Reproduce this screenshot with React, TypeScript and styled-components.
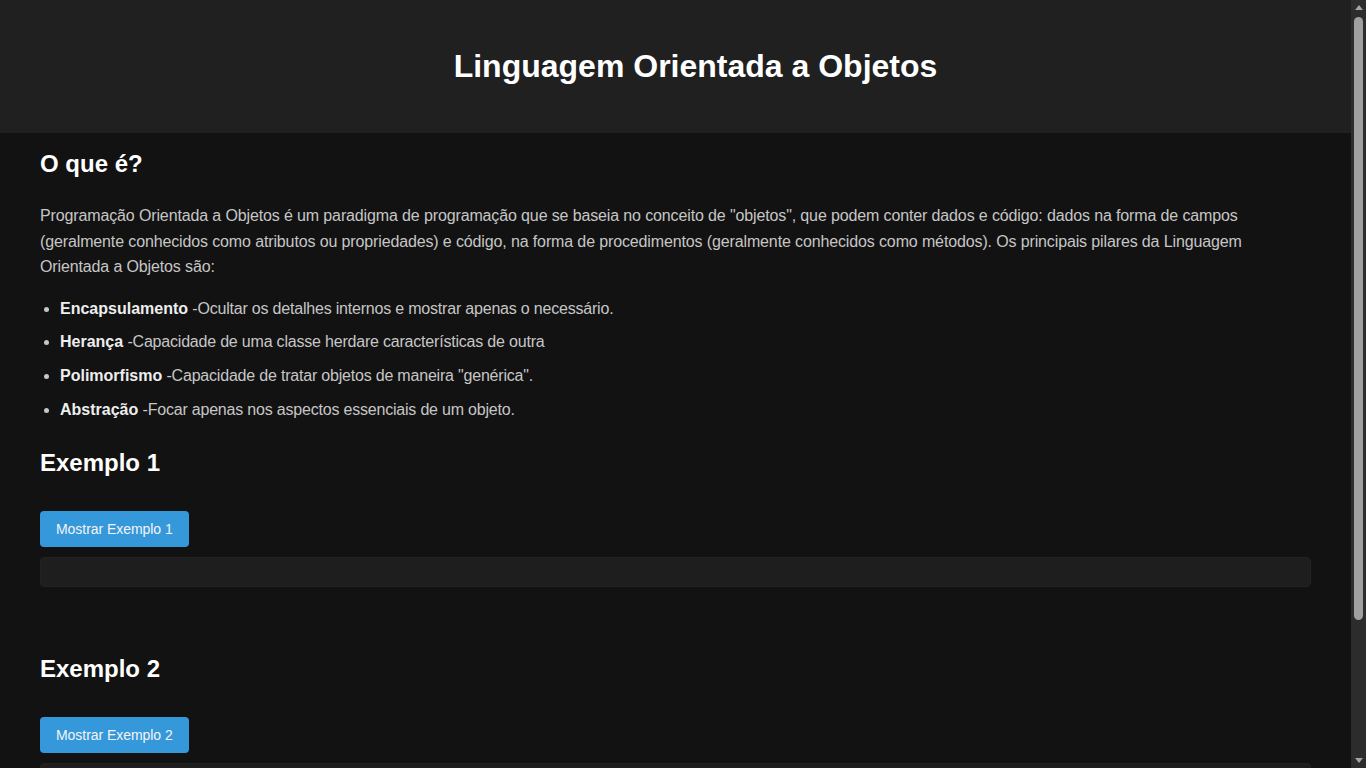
import React from "react";
import styled, { createGlobalStyle } from "styled-components";

const GlobalStyle = createGlobalStyle`
  body {
    margin: 0;
    padding-right: 15px;
    background: #121212;
    color: #c6c6c6;
    font-family: "Liberation Sans", Arial, sans-serif;
  }
`;

const Header = styled.header`
  background: #202020;
  padding: 48px 0 48px 40px;
  text-align: center;
`;

const Title = styled.h1`
  margin: 0;
  font-size: 32px;
  font-weight: bold;
  color: #ffffff;
`;

const Main = styled.main`
  padding: 17px 40px 147px;
`;

const Section = styled.section<{ top?: number }>`
  margin-top: ${props => props.top || 0}px;
`;

const SectionTitle = styled.h2`
  margin: 0;
  font-size: 24px;
  line-height: 28px;
  font-weight: bold;
  color: #ffffff;
`;

const Text = styled.p`
  margin: 25px 0 0;
  font-size: 16px;
  line-height: 25.6px;
  letter-spacing: -0.13px;
  color: #c6c6c6;
`;

const List = styled.ul`
  margin: 16px 0 0;
  padding-left: 20px;
`;

const Item = styled.li`
  font-size: 16px;
  line-height: 25.6px;
  margin-bottom: 8px;
  letter-spacing: -0.2px;
  color: #c6c6c6;

  &:last-child {
    margin-bottom: 0;
  }

  strong {
    letter-spacing: 0;
    color: #eeeeee;
  }
`;

const Button = styled.button`
  display: block;
  margin-top: 34px;
  height: 36px;
  padding: 0 16px;
  border: none;
  border-radius: 4px;
  background: #3498db;
  color: #f4f4f4;
  font-family: "Liberation Sans", Arial, sans-serif;
  font-size: 14px;
  letter-spacing: -0.05px;
  cursor: pointer;
`;

const Output = styled.div`
  margin-top: 10px;
  height: 30px;
  box-sizing: border-box;
  background: #1e1e1e;
  border: 1px solid #222222;
  border-radius: 4px;
`;

/* the window's scrollbar, drawn over the right edge */
const ScrollBar = styled.div`
  position: fixed;
  top: 0;
  right: 0;
  width: 15px;
  height: 100vh;
  background: #2c2c2c;
  display: flex;
  flex-direction: column;
  align-items: center;
`;

const Arrow = styled.div<{ down?: boolean }>`
  height: 15px;
  width: 15px;
  display: flex;
  align-items: center;
  justify-content: center;

  &::before {
    content: "";
    border-left: 4.5px solid transparent;
    border-right: 4.5px solid transparent;
    ${props => (props.down ? "border-top" : "border-bottom")}: 5px solid #a3a3a3;
  }
`;

const Thumb = styled.div`
  margin-top: 2px;
  width: 9px;
  height: 603px;
  border-radius: 5px;
  background: #9f9f9f;
`;

const Track = styled.div`
  flex: 1;
  display: flex;
  flex-direction: column;
  align-items: center;
`;

const pillars = [
  { name: "Encapsulamento", text: "Ocultar os detalhes internos e mostrar apenas o necessário." },
  { name: "Herança", text: "Capacidade de uma classe herdare características de outra" },
  { name: "Polimorfismo", text: "Capacidade de tratar objetos de maneira \"genérica\"." },
  { name: "Abstração", text: "Focar apenas nos aspectos essenciais de um objeto." }
];

const examples = [1, 2];

const App: React.FC = () => {
  return (
    <>
      <GlobalStyle />
      <Header>
        <Title>Linguagem Orientada a Objetos</Title>
      </Header>
      <Main>
        <Section>
          <SectionTitle>O que é?</SectionTitle>
          <Text>
            Programação Orientada a Objetos é um paradigma de programação que se baseia no conceito de "objetos", que
            podem conter dados e código: dados na forma de campos (geralmente conhecidos como atributos ou
            propriedades) e código, na forma de procedimentos (geralmente conhecidos como métodos). Os principais
            pilares da Linguagem Orientada a Objetos são:
          </Text>
          <List>
            {pillars.map(p => (
              <Item key={p.name}>
                <strong>{p.name}</strong> -{p.text}
              </Item>
            ))}
          </List>
        </Section>
        {examples.map((n, i) => (
          <Section key={n} top={i === 0 ? 27 : 68}>
            <SectionTitle>Exemplo {n}</SectionTitle>
            <Button>Mostrar Exemplo {n}</Button>
            <Output />
          </Section>
        ))}
      </Main>
      <ScrollBar>
        <Arrow />
        <Track>
          <Thumb />
        </Track>
        <Arrow down />
      </ScrollBar>
    </>
  );
};

export default App;
